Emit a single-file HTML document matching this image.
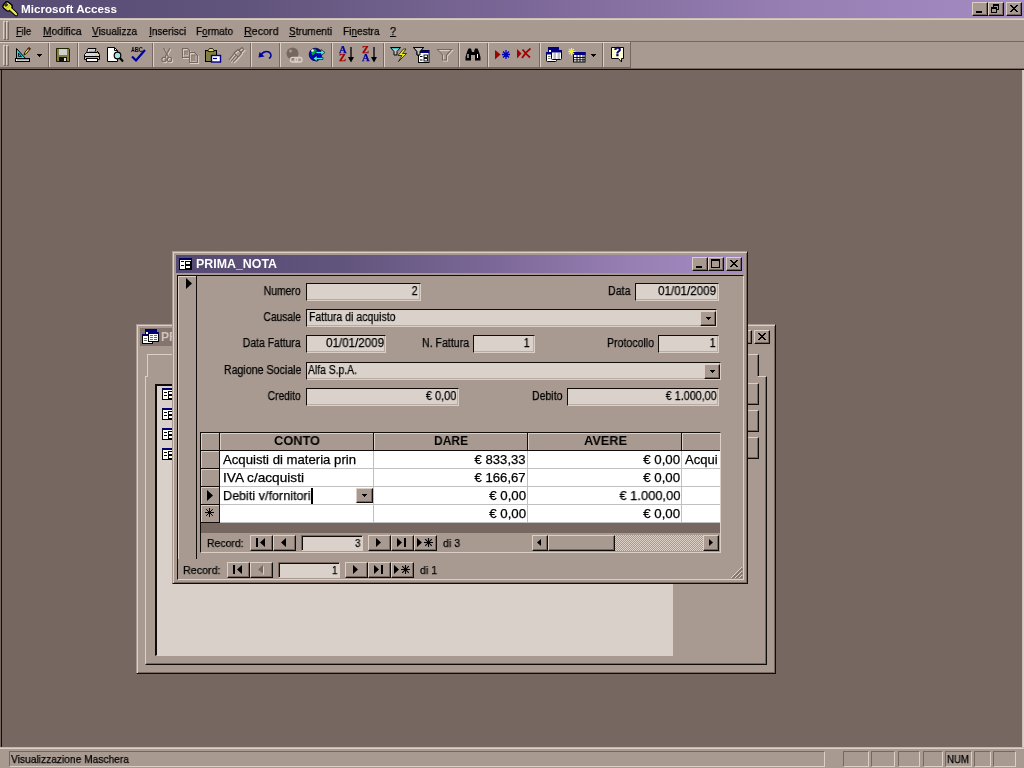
<!DOCTYPE html>
<html><head><meta charset="utf-8"><title>Microsoft Access</title>
<style>
:root{--bg:#766860;--face:#a89a91;--hi:#dcd0c6;--fld:#dad1ca;--dk:#100c0a;--sh:#766860;}
*{box-sizing:border-box;margin:0;padding:0}
html,body{width:1024px;height:768px;overflow:hidden;background:var(--bg);font-family:"Liberation Sans",sans-serif;font-size:11px;color:#000}
.a{position:absolute}
.t{position:absolute;white-space:nowrap;line-height:14px;height:14px;will-change:transform;-webkit-text-stroke:.25px currentColor}
.r{text-align:right}
.btn{position:absolute;background:var(--face);border-top:1px solid var(--hi);border-left:1px solid var(--hi);border-right:1px solid var(--dk);border-bottom:1px solid var(--dk);box-shadow:inset -1px -1px 0 var(--sh)}
.fld{position:absolute;background:var(--fld);border-top:1px solid var(--dk);border-left:1px solid var(--dk);border-right:1px solid var(--hi);border-bottom:1px solid var(--hi);box-shadow:inset -1px -1px 0 #b9aba2;height:18px;line-height:14px;white-space:nowrap;overflow:hidden}
.win{position:absolute;background:var(--face);border-top:1px solid var(--face);border-left:1px solid var(--face);border-right:1px solid var(--dk);border-bottom:1px solid var(--dk);box-shadow:inset 1px 1px 0 var(--hi), inset -1px -1px 0 var(--sh)}
.sep{position:absolute;top:43px;width:2px;height:24px;border-left:1px solid var(--sh);border-right:1px solid var(--hi)}
.grip{position:absolute;width:3px;border-left:1px solid var(--hi);border-top:1px solid var(--hi);border-right:1px solid var(--sh);border-bottom:1px solid var(--sh)}
.sp{position:absolute;top:751px;height:16px;border-top:1px solid var(--sh);border-left:1px solid var(--sh);border-right:1px solid var(--hi);border-bottom:1px solid var(--hi)}
.ic{position:absolute;overflow:visible}
.dt{position:absolute;font-size:13px;line-height:16px;height:16px;white-space:nowrap}
svg{position:absolute;overflow:visible;shape-rendering:crispEdges}
</style></head><body>
<div class="a" style="left:0px;top:0px;width:1024px;height:18px;background:linear-gradient(90deg,#564b73 0%,#62557d 25%,#7b6797 50%,#977fb3 78%,#a48cc4 100%);"></div>
<div class="t" style="font-size:11.5px;line-height:14px;height:14px;font-weight:bold;-webkit-text-stroke:0;color:#fff;left:21px;top:2px;transform-origin:0 0;transform:scaleX(1.0127);">Microsoft Access</div>
<svg style="left:0.800px;top:0.600px;shape-rendering:geometricPrecision" width="18" height="16.200" viewBox="0 0 20 18"><path d="M10.500 9 L16.800 14.800" stroke="#000" stroke-width="4.600" stroke-linecap="round"/><rect x="2.600" y="1.800" width="9.400" height="8.600" rx="3.200" fill="#e8e838" stroke="#000" stroke-width="1.500" transform="rotate(40 7.300 6.100)"/><path d="M10 8.500 L16.800 14.800" stroke="#e8e838" stroke-width="2.400" stroke-linecap="round"/><path d="M11 8.300 L16.500 13.300" stroke="#fffff0" stroke-width=".700"/><path d="M4 4.200 L6.200 2.800 L7.400 4.600 L5.200 6Z" fill="#5a4f78" stroke="#000" stroke-width=".900"/><path d="M6 8.500 L10.500 4.500" stroke="#a8a020" stroke-width=".800"/></svg>
<div class="btn" style="left:972px;top:2px;width:16px;height:14px"></div>
<div class="a" style="left:976px;top:11px;width:6px;height:2px;background:#000;"></div>
<div class="btn" style="left:988px;top:2px;width:16px;height:14px"></div>
<div class="a" style="left:993px;top:4px;width:6px;height:6px;border:1px solid #000;border-top:2px solid #000"></div>
<div class="a" style="left:991px;top:7px;width:6px;height:6px;border:1px solid #000;border-top:2px solid #000;background:var(--face)"></div>
<div class="btn" style="left:1006px;top:2px;width:16px;height:14px"></div>
<svg style="left:1010px;top:5px" width="8" height="7" viewBox="0 0 8 7"><path d="M0 0h2v1h1v1h2v-1h1v-1h2v1h-1v1h-1v1h-1v1h1v1h1v1h1v1h-2v-1h-1v-1h-2v1h-1v1h-2v-1h1v-1h1v-1h1v-1h-1v-1h-1v-1h-1z" fill="#000"/></svg>
<div class="a" style="left:0px;top:18px;width:1024px;height:50px;background:var(--face);"></div>
<div class="a" style="left:0px;top:18px;width:1024px;height:1px;background:#cbbfb5;"></div>
<div class="a" style="left:0px;top:19px;width:1024px;height:1px;background:var(--hi);"></div>
<div class="a" style="left:0px;top:41px;width:1024px;height:1px;background:var(--sh);"></div>
<div class="a" style="left:0px;top:42px;width:631px;height:1px;background:var(--hi);"></div>
<div class="a" style="left:0px;top:67px;width:631px;height:1px;background:var(--sh);"></div>
<div class="a" style="left:0px;top:68px;width:1024px;height:1px;background:var(--sh);"></div>
<div class="a" style="left:0px;top:69px;width:1024px;height:1px;background:var(--dk);"></div>
<div class="grip" style="left:3px;top:21px;height:19px"></div>
<div class="grip" style="left:6px;top:21px;height:19px"></div>
<div class="grip" style="left:3px;top:45px;height:21px"></div>
<div class="grip" style="left:6px;top:45px;height:21px"></div>
<div class="t" style="font-size:11.5px;line-height:14px;height:14px;left:16px;top:24px;transform-origin:0 0;transform:scaleX(0.8095);"><u>F</u>ile</div>
<div class="t" style="font-size:11.5px;line-height:14px;height:14px;left:42.5px;top:24px;transform-origin:0 0;transform:scaleX(0.8991);"><u>M</u>odifica</div>
<div class="t" style="font-size:11.5px;line-height:14px;height:14px;left:92px;top:24px;transform-origin:0 0;transform:scaleX(0.8727);"><u>V</u>isualizza</div>
<div class="t" style="font-size:11.5px;line-height:14px;height:14px;left:148.5px;top:24px;transform-origin:0 0;transform:scaleX(0.8773);"><u>I</u>nserisci</div>
<div class="t" style="font-size:11.5px;line-height:14px;height:14px;left:196px;top:24px;transform-origin:0 0;transform:scaleX(0.8642);">F<u>o</u>rmato</div>
<div class="t" style="font-size:11.5px;line-height:14px;height:14px;left:244px;top:24px;transform-origin:0 0;transform:scaleX(0.9307);"><u>R</u>ecord</div>
<div class="t" style="font-size:11.5px;line-height:14px;height:14px;left:289px;top:24px;transform-origin:0 0;transform:scaleX(0.8738);"><u>S</u>trumenti</div>
<div class="t" style="font-size:11.5px;line-height:14px;height:14px;left:343px;top:24px;transform-origin:0 0;transform:scaleX(0.8787);">Fi<u>n</u>estra</div>
<div class="t" style="font-size:11.5px;line-height:14px;height:14px;left:390px;top:24px;transform-origin:0 0;transform:scaleX(0.9382);"><u>?</u></div>
<div class="sep" style="left:48px"></div>
<div class="sep" style="left:77px"></div>
<div class="sep" style="left:152px"></div>
<div class="sep" style="left:250px"></div>
<div class="sep" style="left:279px"></div>
<div class="sep" style="left:331px"></div>
<div class="sep" style="left:383px"></div>
<div class="sep" style="left:458px"></div>
<div class="sep" style="left:487px"></div>
<div class="sep" style="left:539px"></div>
<div class="sep" style="left:602px"></div>
<div class="a" style="left:630px;top:42px;width:1px;height:26px;background:var(--sh);"></div>
<svg style="left:15px;top:47px;shape-rendering:geometricPrecision" width="16" height="16" viewBox="0 0 16 16"><path d="M1.5 1.5 L1.5 11.5 L10.5 11.5 Z" fill="#20d8e0" stroke="#000" stroke-width="1"/><path d="M3.5 6 L3.5 9.5 L6.5 9.5 Z" fill="#a89a91" stroke="#000" stroke-width=".8"/><rect x="0.5" y="11.5" width="14" height="3" fill="#fff" stroke="#000" stroke-width="1"/><path d="M3 12v1.5M5 12v1.5M7 12v1.5M9 12v1.5M11 12v1.5M13 12v1.5" stroke="#000" stroke-width=".8"/><path d="M9 8 L10 5 L13.5 1 L15 2.2 L11.5 6.5 Z" fill="#e8d040" stroke="#000" stroke-width=".8"/><path d="M12.8 1.6 L14 0.4 L15.6 1.6 L14.6 2.8Z" fill="#803010" stroke="#000" stroke-width=".5"/></svg>
<svg style="left:37px;top:54px" width="5" height="3" viewBox="0 0 5 3"><path d="M0 0h5v1h-1v1h-1v1h-1v-1h-1v-1h-1z" fill="#000"/></svg>
<svg style="left:56px;top:48px;shape-rendering:geometricPrecision" width="14" height="14" viewBox="0 0 14 14"><path d="M0 0H13L14 1V14H0Z" fill="#808040"/><path d="M.5 .5H12.8L13.5 1.2V13.5H.5Z" fill="none" stroke="#202000" stroke-width="1"/><rect x="3" y="1" width="8" height="6" fill="#d0d0d0"/><rect x="3" y="9" width="8" height="5" fill="#101010"/><rect x="8" y="10" width="2" height="3" fill="#e0e0e0"/></svg>
<svg style="left:84px;top:48px;shape-rendering:geometricPrecision" width="16" height="14" viewBox="0 0 16 14"><path d="M4 0.5H12L10.5 5H2.5Z" fill="#fff" stroke="#000" stroke-width="1"/><path d="M5 2H10.5M4.5 3.5H10" stroke="#808080" stroke-width=".8"/><path d="M.5 6.5 L2.5 4.5 H13.5 L15.5 6.5 V11.5 H.5Z" fill="#d8d8d8" stroke="#000" stroke-width="1"/><rect x="1" y="8" width="14" height="1.2" fill="#000"/><rect x="2.5" y="10.5" width="11" height="3" fill="#fff" stroke="#000" stroke-width="1"/><rect x="11" y="6.5" width="2.5" height="1" fill="#e0e000"/><path d="M13 3 L15.5 5.5" stroke="#000" stroke-width="1"/></svg>
<svg style="left:107px;top:47px;shape-rendering:geometricPrecision" width="17" height="16" viewBox="0 0 17 16"><path d="M.5 .5H7.5L10.5 3.5V14.5H.5Z" fill="#fff" stroke="#000" stroke-width="1"/><path d="M7.5 .5V3.5H10.5" fill="none" stroke="#000" stroke-width="1"/><circle cx="10.5" cy="8.5" r="3.3" fill="#a0e8e8" stroke="#000" stroke-width="1.2"/><path d="M13 11 L16 14.5" stroke="#000" stroke-width="2"/></svg>
<div class="t" style="font-size:6.5px;line-height:10px;height:10px;font-weight:bold;-webkit-text-stroke:0;left:131px;top:45px;transform-origin:0 0;transform:scaleX(0.8167);">ABC</div>
<svg style="left:130px;top:49px;shape-rendering:geometricPrecision" width="17" height="14" viewBox="0 0 17 14"><path d="M2 7.5 L6 11.5 L15 1" fill="none" stroke="#0000a0" stroke-width="2.2"/></svg>
<svg style="left:162px;top:49px;shape-rendering:geometricPrecision" width="12" height="15" viewBox="0 0 12 15"><g stroke="#dcd0c6" fill="none" stroke-width="1.1"><path d="M2.5 0 L7.5 9 M9 0 L4 9"/><circle cx="3" cy="11.5" r="2.2"/><circle cx="8.5" cy="11.5" r="2.2"/></g></svg>
<svg style="left:161px;top:48px;shape-rendering:geometricPrecision" width="12" height="15" viewBox="0 0 12 15"><g stroke="#766860" fill="none" stroke-width="1.1"><path d="M2.5 0 L7.5 9 M9 0 L4 9"/><circle cx="3" cy="11.5" r="2.2"/><circle cx="8.5" cy="11.5" r="2.2"/></g></svg>
<svg style="left:183px;top:49px;shape-rendering:geometricPrecision" width="17" height="15" viewBox="0 0 17 15"><g stroke="#dcd0c6" fill="none" stroke-width="1.1"><path d="M.5 .5H5.5L7.5 2.5V9.5H.5Z"/><path d="M2 4H6M2 6H6"/><path d="M7.5 4.5H12.5L15.5 7.5V14.5H7.5Z" /><path d="M9 8H13.5M9 10H13.5M9 12H13.5"/></g></svg>
<svg style="left:182px;top:48px;shape-rendering:geometricPrecision" width="17" height="15" viewBox="0 0 17 15"><g stroke="#766860" fill="none" stroke-width="1.1"><path d="M.5 .5H5.5L7.5 2.5V9.5H.5Z"/><path d="M2 4H6M2 6H6"/><path d="M7.5 4.5H12.5L15.5 7.5V14.5H7.5Z" /><path d="M9 8H13.5M9 10H13.5M9 12H13.5"/></g></svg>
<svg style="left:205px;top:48px;shape-rendering:geometricPrecision" width="17" height="15" viewBox="0 0 17 15"><rect x=".5" y="2.5" width="11" height="11" fill="#808040" stroke="#000" stroke-width="1"/><path d="M3 2.5 L4.5 .5 H7.5 L9 2.5 V3.5 H3Z" fill="#e0d860" stroke="#000" stroke-width=".8"/><rect x="6.500" y="7.500" width="9" height="6.500" fill="#fff" stroke="#000090" stroke-width="1.400"/><path d="M8 10.500H12" stroke="#000090" stroke-width="1.200"/></svg>
<svg style="left:229px;top:48px;shape-rendering:geometricPrecision" width="17" height="16" viewBox="0 0 17 16"><g stroke="#dcd0c6" fill="none" stroke-width="1.1"><path d="M11 3 L14 0.500 L16 2.500 L13 5.500Z"/><path d="M6 6 L10 2.500 L13.500 6 L10 10Z"/><path d="M1 13 L6 6.500 M2.500 14.500 L8 8.500 M5 15 L10 10"/></g></svg>
<svg style="left:228px;top:47px;shape-rendering:geometricPrecision" width="17" height="16" viewBox="0 0 17 16"><g stroke="#766860" fill="none" stroke-width="1.1"><path d="M11 3 L14 0.500 L16 2.500 L13 5.500Z"/><path d="M6 6 L10 2.500 L13.500 6 L10 10Z"/><path d="M1 13 L6 6.500 M2.500 14.500 L8 8.500 M5 15 L10 10"/></g></svg>
<svg style="left:258px;top:50px;shape-rendering:geometricPrecision" width="15" height="9" viewBox="0 0 15 9"><path d="M3 5.500 C4 1.500,10 0,12.500 3.500 C13.500 5.500,12.500 7.500,11 8.500" fill="none" stroke="#0000a0" stroke-width="1.500"/><path d="M.500 7.500 L1.500 2 L6.500 6.500Z" fill="#0000a0"/></svg>
<svg style="left:286px;top:47px;shape-rendering:geometricPrecision" width="17" height="16" viewBox="0 0 17 16"><circle cx="6.500" cy="6.500" r="6" fill="#766860"/><circle cx="4.500" cy="4" r="1.500" fill="#a89a91"/><rect x="4.500" y="10.500" width="7" height="4.500" rx="2" fill="none" stroke="#dcd0c6" stroke-width="1.300"/><rect x="9" y="10.500" width="7" height="4.500" rx="2" fill="none" stroke="#dcd0c6" stroke-width="1.300"/></svg>
<svg style="left:309px;top:47px;shape-rendering:geometricPrecision" width="17" height="16" viewBox="0 0 17 16"><circle cx="6.500" cy="7.500" r="6.300" fill="#0000c0" stroke="#000040" stroke-width=".800"/><path d="M2 4 C4 1,7 2,8 4 C6 6,5 9,3 8Z" fill="#00a040"/><path d="M5 11 C7 10,9 12,7 13.500Z" fill="#00a040"/><circle cx="3.500" cy="3.500" r="1.200" fill="#fff"/><path d="M7 4.500 H12 V2.500 L16 5.500 L12 8.500 V6.500 H7Z" fill="#40e8f0" stroke="#000" stroke-width=".600"/><path d="M14 10.500 H8 V8.500 L4 11.500 L8 14.500 V12.500 H14Z" fill="#40e8f0" stroke="#000" stroke-width=".600"/></svg>
<div class="t" style="left:339px;top:44px;font-size:10.500px;font-weight:bold;line-height:11px;color:#0000a0;font-family:'Liberation Serif',serif">A</div>
<div class="t" style="left:339px;top:52px;font-size:10.500px;font-weight:bold;line-height:11px;color:#a00000;font-family:'Liberation Serif',serif">Z</div>
<svg style="left:348px;top:47px;shape-rendering:geometricPrecision" width="6" height="16" viewBox="0 0 6 16"><path d="M3 0V12" stroke="#000" stroke-width="1.300"/><path d="M0 10H6L3 15.500Z" fill="#000"/></svg>
<div class="t" style="left:362px;top:44px;font-size:10.500px;font-weight:bold;line-height:11px;color:#a00000;font-family:'Liberation Serif',serif">Z</div>
<div class="t" style="left:362px;top:52px;font-size:10.500px;font-weight:bold;line-height:11px;color:#0000a0;font-family:'Liberation Serif',serif">A</div>
<svg style="left:371px;top:47px;shape-rendering:geometricPrecision" width="6" height="16" viewBox="0 0 6 16"><path d="M3 0V12" stroke="#000" stroke-width="1.300"/><path d="M0 10H6L3 15.500Z" fill="#000"/></svg>
<svg style="left:390px;top:47px;shape-rendering:geometricPrecision" width="17" height="16" viewBox="0 0 17 16"><path d="M.500 .500H10.500L7 4.500V8H4V4.500Z" fill="#c0c0c0" stroke="#000" stroke-width="1"/><path d="M2 1.500H9" stroke="#40c0c0" stroke-width="1"/><path d="M13.500 2 L8 8.500 H12 L8.500 14.500 L16.500 6.500 H12.500 L16 2Z" fill="#f0f020" stroke="#000" stroke-width=".700"/></svg>
<svg style="left:413px;top:47px;shape-rendering:geometricPrecision" width="17" height="16" viewBox="0 0 17 16"><path d="M.500 .500H10.500L7 4.500V8H4V4.500Z" fill="#c0c0c0" stroke="#000" stroke-width="1"/><path d="M2 1.500H9" stroke="#40c0c0" stroke-width="1"/><rect x="5.500" y="3.500" width="10.500" height="12" fill="#fff" stroke="#000" stroke-width="1"/><rect x="5.500" y="3.500" width="10.500" height="2.500" fill="#000080"/><rect x="11" y="8" width="3.500" height="2.500" fill="none" stroke="#000" stroke-width=".900"/><rect x="11" y="11.500" width="3.500" height="2.500" fill="none" stroke="#000" stroke-width=".900"/><path d="M7 9.500H9.500M7 13H9.500" stroke="#000" stroke-width="1"/><path d="M.500 .500H10.500L7 4.500V8H4V4.500Z" fill="#c0c0c0" stroke="#000" stroke-width="1"/></svg>
<svg style="left:438px;top:50px;shape-rendering:geometricPrecision" width="15" height="12" viewBox="0 0 15 12"><g stroke="#dcd0c6" fill="none" stroke-width="1.1"><path d="M.500 .500H14.500L9.500 6V11H5.500V6Z"/></g></svg>
<svg style="left:437px;top:49px;shape-rendering:geometricPrecision" width="15" height="12" viewBox="0 0 15 12"><g stroke="#766860" fill="none" stroke-width="1.1"><path d="M.500 .500H14.500L9.500 6V11H5.500V6Z"/></g></svg>
<svg style="left:465px;top:48px;shape-rendering:geometricPrecision" width="16" height="13" viewBox="0 0 16 13"><path d="M2 4 L3.500 .500 H6 L7 4 H9 L10 .500 H12.500 L14 4 L15.500 9 V12.500 H10 V7 H6 V12.500 H.500 V9Z" fill="#000"/><path d="M3 6V10M12.500 6V10" stroke="#fff" stroke-width="1"/></svg>
<svg style="left:495px;top:50px;shape-rendering:geometricPrecision" width="6" height="10" viewBox="0 0 6 10"><path d="M0 0L5.500 4.500L0 9.500Z" fill="#a00000"/></svg>
<svg style="left:502px;top:50px;shape-rendering:geometricPrecision" width="8" height="9" viewBox="0 0 8 9"><path d="M4 0V9M0 4.500H8M1 1.500L7 7.500M7 1.500L1 7.500" stroke="#0000c0" stroke-width="1.300" fill="none"/></svg>
<svg style="left:517px;top:49px;shape-rendering:geometricPrecision" width="5" height="10" viewBox="0 0 5 10"><path d="M0 0L4.500 4.500L0 9.500Z" fill="#a00000"/></svg>
<svg style="left:521px;top:48px;shape-rendering:geometricPrecision" width="10" height="11" viewBox="0 0 10 11"><path d="M1 10 C3 7,6 3,9.500 .500 M1.500 1.500 C3.500 4,6 7,9 9.500" stroke="#a00000" stroke-width="1.700" fill="none"/></svg>
<svg style="left:546px;top:47px;shape-rendering:geometricPrecision" width="17" height="15" viewBox="0 0 17 15"><rect x="2.500" y=".500" width="10" height="9" fill="#fff" stroke="#000070" stroke-width="1"/><rect x="2" y="0" width="11" height="3" fill="#000080"/><rect x=".500" y="5.500" width="10" height="9" rx="1" fill="#fff" stroke="#000" stroke-width="1"/><rect x="0" y="5" width="11" height="2.500" fill="#000080"/><rect x="5.500" y="3.500" width="10" height="9" rx="1" fill="#fff" stroke="#000" stroke-width="1"/><rect x="5" y="3" width="11" height="2.500" fill="#000080"/><path d="M7.500 7H10M11.500 7H14M7.500 9H10M11.500 9H14M7.500 11H10M11.500 11H14M2 9.500H4.500M2 11.500H4.500" stroke="#808080" stroke-width="1"/></svg>
<svg style="left:568px;top:48px;shape-rendering:geometricPrecision" width="18" height="15" viewBox="0 0 18 15"><rect x="5.500" y="4.500" width="11.500" height="9.500" fill="#fff" stroke="#000" stroke-width="1"/><rect x="5" y="4" width="12.500" height="3" fill="#000080"/><path d="M6 9.500H17M6 11.800H17M9 7V14M12 7V14M15 7V14" stroke="#000" stroke-width=".900"/><path d="M3.500 0V7.500M0 3.500H7.500M1 1L6 6M6 1L1 6" stroke="#f0f040" stroke-width="1.100"/></svg>
<svg style="left:591px;top:54px" width="5" height="3" viewBox="0 0 5 3"><path d="M0 0h5v1h-1v1h-1v1h-1v-1h-1v-1h-1z" fill="#000"/></svg>
<svg style="left:611px;top:47px;shape-rendering:geometricPrecision" width="14" height="16" viewBox="0 0 14 16"><path d="M.500 .500H12.500V11.500H10.500V15L7.500 11.500H.500Z" fill="#ffffd0" stroke="#000" stroke-width="1"/></svg>
<div class="t" style="left:614px;top:46px;font-size:12px;font-weight:bold;line-height:13px;color:#000070;-webkit-text-stroke:.4px #000070">?</div>
<div class="a" style="left:0px;top:70px;width:1024px;height:677px;background:var(--bg);"></div>
<div class="a" style="left:0px;top:70px;width:1px;height:677px;background:var(--sh);"></div>
<div class="a" style="left:1px;top:70px;width:1px;height:677px;background:var(--dk);"></div>
<div class="a" style="left:1022px;top:70px;width:1px;height:677px;background:#cfc3ba;"></div>
<div class="a" style="left:1023px;top:70px;width:1px;height:677px;background:var(--hi);"></div>
<div class="a" style="left:0px;top:747px;width:1024px;height:21px;background:var(--face);"></div>
<div class="a" style="left:0px;top:747px;width:1024px;height:1px;background:#c4b8ae;"></div>
<div class="a" style="left:0px;top:748px;width:1024px;height:1px;background:var(--hi);"></div>
<div class="sp" style="left:9px;width:816px"></div>
<div class="sp" style="left:843px;width:26px"></div>
<div class="sp" style="left:871px;width:24px"></div>
<div class="sp" style="left:898px;width:22px"></div>
<div class="sp" style="left:923px;width:20px"></div>
<div class="sp" style="left:945px;width:27px"></div>
<div class="sp" style="left:974px;width:17px"></div>
<div class="sp" style="left:993px;width:23px"></div>
<div class="t" style="font-size:11.5px;line-height:14px;height:14px;left:11px;top:752px;transform-origin:0 0;transform:scaleX(0.8890);">Visualizzazione Maschera</div>
<div class="t" style="font-size:11.5px;line-height:14px;height:14px;left:947px;top:752px;transform-origin:0 0;transform:scaleX(0.8400);">NUM</div>
<div class="win" style="left:136px;top:324px;width:640px;height:350px"></div>
<div class="a" style="left:140px;top:328px;width:632px;height:18px;background:linear-gradient(90deg,#84746d 0%,#8a7a73 30%,#9a8b83 65%,#a6988f 100%);"></div>
<svg style="left:142px;top:329px" width="17" height="15" viewBox="0 0 17 15"><rect x="3" y="0" width="11" height="9" fill="#fff" stroke="#000060" stroke-width="1" transform="translate(.5,.5)"/><rect x="3" y="0" width="12" height="3" fill="#000070"/><rect x="0" y="5" width="10" height="9" fill="#fff" stroke="#000" stroke-width="1" transform="translate(.5,.5)"/><rect x="0" y="5" width="11" height="2" fill="#000070"/><rect x="6" y="3" width="10" height="9" fill="#fff" stroke="#000" stroke-width="1" transform="translate(.5,.5)"/><rect x="6" y="3" width="11" height="2" fill="#000070"/><g fill="#707070"><rect x="8" y="6" width="3" height="1"/><rect x="12" y="6" width="3" height="1"/><rect x="8" y="8" width="3" height="1"/><rect x="12" y="8" width="3" height="1"/><rect x="8" y="10" width="3" height="1"/><rect x="12" y="10" width="3" height="1"/><rect x="2" y="9" width="3" height="1"/><rect x="2" y="11" width="3" height="1"/></g></svg>
<div class="t" style="font-size:12px;line-height:14px;height:14px;font-weight:bold;-webkit-text-stroke:0;color:#cfc4bc;left:161px;top:330px;transform-origin:0 0;transform:scaleX(1.0086);">PRIMA</div>
<div class="btn" style="left:736px;top:330px;width:16px;height:14px"></div>
<div class="a" style="left:739px;top:332px;width:9px;height:9px;border:1px solid #000;border-top:2px solid #000"></div>
<div class="btn" style="left:754px;top:330px;width:16px;height:14px"></div>
<svg style="left:758px;top:333px" width="8" height="7" viewBox="0 0 8 7"><path d="M0 0h2v1h1v1h2v-1h1v-1h2v1h-1v1h-1v1h-1v1h1v1h1v1h1v1h-2v-1h-1v-1h-2v1h-1v1h-2v-1h1v-1h1v-1h1v-1h-1v-1h-1v-1h-1z" fill="#000"/></svg>
<div class="a" style="left:147px;top:354px;width:612px;height:23px;border-top:1px solid var(--hi);border-left:1px solid var(--hi);border-right:1px solid var(--dk);box-shadow:inset -1px 0 0 var(--sh)"></div>
<div class="a" style="left:145px;top:376px;width:622px;height:289px;background:var(--face);border-top:1px solid var(--hi);border-left:1px solid var(--hi);border-right:1px solid var(--dk);border-bottom:1px solid var(--dk);box-shadow:inset -1px -1px 0 var(--sh)"></div>
<div class="a" style="left:148px;top:376px;width:610px;height:1px;background:var(--face);"></div>
<div class="a" style="left:155px;top:384px;width:518px;height:272px;background:#d9d0c9;border-top:2px solid var(--dk);border-left:2px solid var(--dk);border-right:1px solid var(--hi);border-bottom:1px solid var(--hi)"></div>
<svg style="left:162px;top:388px" width="13" height="12" viewBox="0 0 13 12"><rect x="0" y="0" width="13" height="12" fill="#000070"/><rect x="1" y="2" width="11" height="9" fill="#fff"/><rect x="0" y="2" width="1" height="10" fill="#000"/><rect x="12" y="2" width="1" height="10" fill="#000"/><rect x="0" y="11" width="13" height="1" fill="#000"/><rect x="2" y="4" width="3" height="1" fill="#000"/><rect x="2" y="7" width="3" height="1" fill="#000"/><rect x="6" y="3" width="5" height="3" fill="none" stroke="#000" stroke-width="1" transform="translate(.5,.5)"/><rect x="6" y="7" width="5" height="3" fill="none" stroke="#000" stroke-width="1" transform="translate(.5,.5)"/></svg>
<svg style="left:162px;top:408px" width="13" height="12" viewBox="0 0 13 12"><rect x="0" y="0" width="13" height="12" fill="#000070"/><rect x="1" y="2" width="11" height="9" fill="#fff"/><rect x="0" y="2" width="1" height="10" fill="#000"/><rect x="12" y="2" width="1" height="10" fill="#000"/><rect x="0" y="11" width="13" height="1" fill="#000"/><rect x="2" y="4" width="3" height="1" fill="#000"/><rect x="2" y="7" width="3" height="1" fill="#000"/><rect x="6" y="3" width="5" height="3" fill="none" stroke="#000" stroke-width="1" transform="translate(.5,.5)"/><rect x="6" y="7" width="5" height="3" fill="none" stroke="#000" stroke-width="1" transform="translate(.5,.5)"/></svg>
<svg style="left:162px;top:428px" width="13" height="12" viewBox="0 0 13 12"><rect x="0" y="0" width="13" height="12" fill="#000070"/><rect x="1" y="2" width="11" height="9" fill="#fff"/><rect x="0" y="2" width="1" height="10" fill="#000"/><rect x="12" y="2" width="1" height="10" fill="#000"/><rect x="0" y="11" width="13" height="1" fill="#000"/><rect x="2" y="4" width="3" height="1" fill="#000"/><rect x="2" y="7" width="3" height="1" fill="#000"/><rect x="6" y="3" width="5" height="3" fill="none" stroke="#000" stroke-width="1" transform="translate(.5,.5)"/><rect x="6" y="7" width="5" height="3" fill="none" stroke="#000" stroke-width="1" transform="translate(.5,.5)"/></svg>
<svg style="left:162px;top:448px" width="13" height="12" viewBox="0 0 13 12"><rect x="0" y="0" width="13" height="12" fill="#000070"/><rect x="1" y="2" width="11" height="9" fill="#fff"/><rect x="0" y="2" width="1" height="10" fill="#000"/><rect x="12" y="2" width="1" height="10" fill="#000"/><rect x="0" y="11" width="13" height="1" fill="#000"/><rect x="2" y="4" width="3" height="1" fill="#000"/><rect x="2" y="7" width="3" height="1" fill="#000"/><rect x="6" y="3" width="5" height="3" fill="none" stroke="#000" stroke-width="1" transform="translate(.5,.5)"/><rect x="6" y="7" width="5" height="3" fill="none" stroke="#000" stroke-width="1" transform="translate(.5,.5)"/></svg>
<div class="btn" style="left:683px;top:383px;width:76px;height:22px"></div>
<div class="btn" style="left:683px;top:410px;width:76px;height:22px"></div>
<div class="btn" style="left:683px;top:437px;width:76px;height:22px"></div>
<div class="win" style="left:172px;top:251px;width:576px;height:333px"></div>
<div class="a" style="left:176px;top:255px;width:568px;height:18px;background:linear-gradient(90deg,#554a72 0%,#62557d 30%,#7b6797 55%,#977fb3 80%,#a48cc4 100%);"></div>
<svg style="left:179px;top:258px" width="13" height="12" viewBox="0 0 13 12"><rect x="0" y="0" width="13" height="12" fill="#000060"/><rect x="1" y="2" width="11" height="9" fill="#fff"/><rect x="0" y="2" width="1" height="10" fill="#000"/><rect x="12" y="2" width="1" height="10" fill="#000"/><rect x="0" y="11" width="13" height="1" fill="#000"/><rect x="2" y="3" width="3" height="1" fill="#000"/><rect x="2" y="7" width="3" height="1" fill="#000"/><rect x="6" y="3" width="5" height="3" fill="none" stroke="#000" stroke-width="1" transform="translate(.5,.5)"/><rect x="6" y="7" width="5" height="3" fill="none" stroke="#000" stroke-width="1" transform="translate(.5,.5)"/></svg>
<div class="t" style="font-size:12px;line-height:14px;height:14px;font-weight:bold;-webkit-text-stroke:0;color:#fff;left:196px;top:257px;transform-origin:0 0;transform:scaleX(1.0326);">PRIMA_NOTA</div>
<div class="btn" style="left:692px;top:257px;width:16px;height:14px"></div>
<div class="a" style="left:696px;top:266px;width:6px;height:2px;background:#000;"></div>
<div class="btn" style="left:708px;top:257px;width:16px;height:14px"></div>
<div class="a" style="left:711px;top:259px;width:9px;height:9px;border:1px solid #000;border-top:2px solid #000"></div>
<div class="btn" style="left:726px;top:257px;width:16px;height:14px"></div>
<svg style="left:730px;top:260px" width="8" height="7" viewBox="0 0 8 7"><path d="M0 0h2v1h1v1h2v-1h1v-1h2v1h-1v1h-1v1h-1v1h1v1h1v1h1v1h-2v-1h-1v-1h-2v1h-1v1h-2v-1h1v-1h1v-1h1v-1h-1v-1h-1v-1h-1z" fill="#000"/></svg>
<div class="a" style="left:177px;top:275px;width:567px;height:305px;border-top:1px solid var(--dk);border-left:1px solid var(--dk);border-right:1px solid var(--hi);border-bottom:1px solid var(--hi)"></div>
<div class="a" style="left:178px;top:276px;width:18px;height:283px;background:var(--face);border-left:1px solid var(--hi);border-top:1px solid var(--hi)"></div>
<div class="a" style="left:196px;top:276px;width:1px;height:283px;background:var(--dk);"></div>
<svg style="left:186px;top:278px" width="6" height="11" viewBox="0 0 6 11"><path d="M0 0 L6 5.5 L0 11Z" fill="#000" shape-rendering="auto"/></svg>
<div class="t" style="font-size:12px;line-height:14px;height:14px;right:723px;top:284px;transform-origin:100% 0;transform:scaleX(0.8669);">Numero</div>
<div class="t" style="font-size:12px;line-height:14px;height:14px;right:723px;top:310px;transform-origin:100% 0;transform:scaleX(0.8518);">Causale</div>
<div class="t" style="font-size:12px;line-height:14px;height:14px;right:723px;top:336px;transform-origin:100% 0;transform:scaleX(0.8696);">Data Fattura</div>
<div class="t" style="font-size:12px;line-height:14px;height:14px;right:723px;top:363px;transform-origin:100% 0;transform:scaleX(0.8868);">Ragione Sociale</div>
<div class="t" style="font-size:12px;line-height:14px;height:14px;right:723px;top:389px;transform-origin:100% 0;transform:scaleX(0.8531);">Credito</div>
<div class="t" style="font-size:12px;line-height:14px;height:14px;left:607.5px;top:284px;transform-origin:0 0;transform:scaleX(0.8877);">Data</div>
<div class="t" style="font-size:12px;line-height:14px;height:14px;left:421.5px;top:336px;transform-origin:0 0;transform:scaleX(0.8810);">N. Fattura</div>
<div class="t" style="font-size:12px;line-height:14px;height:14px;left:606.5px;top:336px;transform-origin:0 0;transform:scaleX(0.8808);">Protocollo</div>
<div class="t" style="font-size:12px;line-height:14px;height:14px;left:531.5px;top:389px;transform-origin:0 0;transform:scaleX(0.8793);">Debito</div>
<div class="fld" style="left:306px;top:283px;width:115px"></div>
<div class="t" style="font-size:12px;line-height:14px;height:14px;right:606px;top:284px;transform-origin:100% 0;transform:scaleX(0.8991);">2</div>
<div class="fld" style="left:635px;top:283px;width:84px"></div>
<div class="t" style="font-size:12px;line-height:14px;height:14px;right:308px;top:284px;transform-origin:100% 0;transform:scaleX(0.9658);">01/01/2009</div>
<div class="fld" style="left:306px;top:309px;width:411px"></div>
<div class="t" style="font-size:12px;line-height:14px;height:14px;left:309px;top:310px;transform-origin:0 0;transform:scaleX(0.8762);">Fattura di acquisto</div>
<div class="fld" style="left:306px;top:335px;width:80px"></div>
<div class="t" style="font-size:12px;line-height:14px;height:14px;right:640px;top:336px;transform-origin:100% 0;transform:scaleX(0.9658);">01/01/2009</div>
<div class="fld" style="left:473px;top:335px;width:62px"></div>
<div class="t" style="font-size:12px;line-height:14px;height:14px;right:494px;top:336px;transform-origin:100% 0;transform:scaleX(0.8991);">1</div>
<div class="fld" style="left:658px;top:335px;width:61px"></div>
<div class="t" style="font-size:12px;line-height:14px;height:14px;right:308px;top:336px;transform-origin:100% 0;transform:scaleX(0.8991);">1</div>
<div class="fld" style="left:306px;top:362px;width:415px"></div>
<div class="t" style="font-size:12px;line-height:14px;height:14px;left:308px;top:363px;transform-origin:0 0;transform:scaleX(0.8642);">Alfa S.p.A.</div>
<div class="fld" style="left:306px;top:388px;width:153px"></div>
<div class="t" style="font-size:12px;line-height:14px;height:14px;right:567.5px;top:389px;transform-origin:100% 0;transform:scaleX(0.9142);">&euro; 0,00</div>
<div class="fld" style="left:567px;top:388px;width:152px"></div>
<div class="t" style="font-size:12px;line-height:14px;height:14px;right:307px;top:389px;transform-origin:100% 0;transform:scaleX(0.8992);">&euro; 1.000,00</div>
<div class="btn" style="left:700px;top:311px;width:16px;height:15px"></div>
<svg style="left:706px;top:317px" width="5" height="3" viewBox="0 0 5 3"><path d="M0 0h5v1h-1v1h-1v1h-1v-1h-1v-1h-1z" fill="#000"/></svg>
<div class="btn" style="left:704px;top:364px;width:16px;height:15px"></div>
<svg style="left:710px;top:370px" width="5" height="3" viewBox="0 0 5 3"><path d="M0 0h5v1h-1v1h-1v1h-1v-1h-1v-1h-1z" fill="#000"/></svg>
<div class="a" style="left:200px;top:432px;width:521px;height:121px;background:var(--face);"></div>
<div class="a" style="left:200px;top:432px;width:521px;height:121px;border-top:1px solid var(--dk);border-left:1px solid var(--dk);border-bottom:1px solid var(--hi);border-right:1px solid var(--hi)"></div>
<div class="a" style="left:201px;top:451px;width:519px;height:72px;background:#fff;"></div>
<div class="a" style="left:201px;top:433px;width:519px;height:17px;background:var(--face);"></div>
<div class="a" style="left:201px;top:433px;width:519px;height:1px;background:var(--hi);"></div>
<div class="a" style="left:201px;top:450px;width:519px;height:1px;background:var(--dk);"></div>
<div class="a" style="left:201px;top:433px;width:1px;height:17px;background:var(--hi);"></div>
<div class="a" style="left:220px;top:433px;width:1px;height:17px;background:var(--hi);"></div>
<div class="a" style="left:374px;top:433px;width:1px;height:17px;background:var(--hi);"></div>
<div class="a" style="left:528px;top:433px;width:1px;height:17px;background:var(--hi);"></div>
<div class="a" style="left:682px;top:433px;width:1px;height:17px;background:var(--hi);"></div>
<div class="a" style="left:219px;top:433px;width:1px;height:90px;background:var(--dk);"></div>
<div class="a" style="left:373px;top:433px;width:1px;height:90px;background:var(--dk);"></div>
<div class="a" style="left:527px;top:433px;width:1px;height:90px;background:var(--dk);"></div>
<div class="a" style="left:681px;top:433px;width:1px;height:90px;background:var(--dk);"></div>
<div class="a" style="left:373px;top:451px;width:1px;height:72px;background:#c0c0c0;"></div>
<div class="a" style="left:527px;top:451px;width:1px;height:72px;background:#c0c0c0;"></div>
<div class="a" style="left:681px;top:451px;width:1px;height:72px;background:#c0c0c0;"></div>
<div class="a" style="left:220px;top:468px;width:500px;height:1px;background:#c0c0c0;"></div>
<div class="a" style="left:220px;top:486px;width:500px;height:1px;background:#c0c0c0;"></div>
<div class="a" style="left:220px;top:504px;width:500px;height:1px;background:#c0c0c0;"></div>
<div class="a" style="left:220px;top:522px;width:500px;height:1px;background:#c0c0c0;"></div>
<div class="a" style="left:201px;top:451px;width:18px;height:17px;background:var(--face);border-left:1px solid var(--hi);border-top:1px solid var(--hi)"></div>
<div class="a" style="left:201px;top:468px;width:19px;height:1px;background:var(--dk);"></div>
<div class="a" style="left:201px;top:469px;width:18px;height:17px;background:var(--face);border-left:1px solid var(--hi);border-top:1px solid var(--hi)"></div>
<div class="a" style="left:201px;top:486px;width:19px;height:1px;background:var(--dk);"></div>
<div class="a" style="left:201px;top:487px;width:18px;height:17px;background:var(--face);border-left:1px solid var(--hi);border-top:1px solid var(--hi)"></div>
<div class="a" style="left:201px;top:504px;width:19px;height:1px;background:var(--dk);"></div>
<div class="a" style="left:201px;top:505px;width:18px;height:17px;background:var(--face);border-left:1px solid var(--hi);border-top:1px solid var(--hi)"></div>
<div class="a" style="left:201px;top:522px;width:19px;height:1px;background:var(--dk);"></div>
<div class="a" style="left:219px;top:433px;width:1px;height:90px;background:var(--dk);"></div>
<div class="t" style="font-size:13px;line-height:16px;height:16px;font-weight:bold;-webkit-text-stroke:0;left:274px;top:433px;transform-origin:0 0;transform:scaleX(0.9849);">CONTO</div>
<div class="t" style="font-size:13px;line-height:16px;height:16px;font-weight:bold;-webkit-text-stroke:0;left:434px;top:433px;transform-origin:0 0;transform:scaleX(0.9231);">DARE</div>
<div class="t" style="font-size:13px;line-height:16px;height:16px;font-weight:bold;-webkit-text-stroke:0;left:584px;top:433px;transform-origin:0 0;transform:scaleX(0.9812);">AVERE</div>
<div class="t" style="font-size:13px;line-height:16px;height:16px;left:223px;top:452px;transform-origin:0 0;transform:scaleX(1.0114);">Acquisti di materia prin</div>
<div class="t" style="font-size:13px;line-height:16px;height:16px;left:223px;top:470px;transform-origin:0 0;transform:scaleX(1.0509);">IVA c/acquisti</div>
<div class="t" style="font-size:13px;line-height:16px;height:16px;left:223px;top:488px;transform-origin:0 0;transform:scaleX(0.9689);">Debiti v/fornitori</div>
<div class="a" style="left:311px;top:488px;width:2px;height:16px;background:#000;"></div>
<div class="t" style="font-size:13px;line-height:16px;height:16px;right:498px;top:452px;transform-origin:100% 0;transform:scaleX(1.0078);">&euro; 833,33</div>
<div class="t" style="font-size:13px;line-height:16px;height:16px;right:498px;top:470px;transform-origin:100% 0;transform:scaleX(1.0078);">&euro; 166,67</div>
<div class="t" style="font-size:13px;line-height:16px;height:16px;right:498px;top:488px;transform-origin:100% 0;transform:scaleX(1.0237);">&euro; 0,00</div>
<div class="t" style="font-size:13px;line-height:16px;height:16px;right:498px;top:506px;transform-origin:100% 0;transform:scaleX(1.0237);">&euro; 0,00</div>
<div class="t" style="font-size:13px;line-height:16px;height:16px;right:344px;top:452px;transform-origin:100% 0;transform:scaleX(1.0237);">&euro; 0,00</div>
<div class="t" style="font-size:13px;line-height:16px;height:16px;right:344px;top:470px;transform-origin:100% 0;transform:scaleX(1.0237);">&euro; 0,00</div>
<div class="t" style="font-size:13px;line-height:16px;height:16px;right:344px;top:488px;transform-origin:100% 0;transform:scaleX(0.9928);">&euro; 1.000,00</div>
<div class="t" style="font-size:13px;line-height:16px;height:16px;right:344px;top:506px;transform-origin:100% 0;transform:scaleX(1.0237);">&euro; 0,00</div>
<div class="t" style="font-size:13px;line-height:16px;height:16px;left:685px;top:452px;transform-origin:0 0;transform:scaleX(0.9995);">Acqui</div>
<svg style="left:207px;top:490px" width="6" height="11" viewBox="0 0 6 11"><path d="M0 0 L6 5.5 L0 11Z" fill="#000" shape-rendering="auto"/></svg>
<svg style="left:205px;top:508px" width="9" height="9" viewBox="0 0 9 9"><path d="M4.5 0V9M0 4.5H9M1.2 1.2L7.8 7.8M7.8 1.2L1.2 7.8" stroke="#000" stroke-width="1" fill="none" shape-rendering="auto"/></svg>
<div class="btn" style="left:356px;top:488px;width:17px;height:15px"></div>
<svg style="left:362px;top:494px" width="5" height="3" viewBox="0 0 5 3"><path d="M0 0h5v1h-1v1h-1v1h-1v-1h-1v-1h-1z" fill="#000"/></svg>
<div class="a" style="left:201px;top:523px;width:519px;height:10px;background:var(--sh);"></div>
<div class="a" style="left:201px;top:533px;width:519px;height:19px;background:var(--face);"></div>
<div class="t" style="font-size:11.5px;line-height:14px;height:14px;left:207px;top:536px;transform-origin:0 0;transform:scaleX(0.9065);">Record:</div>
<div class="btn" style="left:250px;top:535px;width:23px;height:16px"></div>
<div class="a" style="left:256px;top:538px;width:2px;height:9px;background:#000;"></div>
<svg style="left:260px;top:538px" width="5" height="9" viewBox="0 0 5 9"><path d="M5 0L0 4.5L5 9Z" fill="#000" shape-rendering="auto"/></svg>
<div class="btn" style="left:273px;top:535px;width:23px;height:16px"></div>
<svg style="left:281px;top:538px" width="5" height="9" viewBox="0 0 5 9"><path d="M5 0L0 4.5L5 9Z" fill="#000" shape-rendering="auto"/></svg>
<div class="btn" style="left:368px;top:535px;width:23px;height:16px"></div>
<svg style="left:376px;top:538px" width="5" height="9" viewBox="0 0 5 9"><path d="M0 0L5 4.5L0 9Z" fill="#000" shape-rendering="auto"/></svg>
<div class="btn" style="left:391px;top:535px;width:23px;height:16px"></div>
<svg style="left:397px;top:538px" width="5" height="9" viewBox="0 0 5 9"><path d="M0 0L5 4.5L0 9Z" fill="#000" shape-rendering="auto"/></svg>
<div class="a" style="left:404px;top:538px;width:2px;height:9px;background:#000;"></div>
<div class="btn" style="left:414px;top:535px;width:23px;height:16px"></div>
<svg style="left:417px;top:538px" width="5" height="9" viewBox="0 0 5 9"><path d="M0 0L5 4.5L0 9Z" fill="#000" shape-rendering="auto"/></svg>
<svg style="left:424px;top:538px" width="9" height="9" viewBox="0 0 9 9"><path d="M4.5 0V9M0 4.5H9M1.2 1.2L7.8 7.8M7.8 1.2L1.2 7.8" stroke="#000" stroke-width="1.1" fill="none" shape-rendering="auto"/></svg>
<div class="fld" style="left:301px;top:535px;width:62px;height:16px;border-top-color:var(--sh);border-left-color:var(--sh);box-shadow:inset 1px 1px 0 var(--dk)"></div>
<div class="t" style="font-size:11px;line-height:14px;height:14px;left:355px;top:536px;transform-origin:0 0;transform:scaleX(0.8991);">3</div>
<div class="t" style="font-size:11.5px;line-height:14px;height:14px;left:443px;top:536px;transform-origin:0 0;transform:scaleX(0.9169);">di 3</div>
<div class="btn" style="left:532px;top:535px;width:16px;height:16px"></div>
<svg style="left:537px;top:539px" width="4" height="7" viewBox="0 0 4 7"><path d="M4 0L0 3.5L4 7Z" fill="#000" shape-rendering="auto"/></svg>
<div class="a" style="left:548px;top:535px;width:155px;height:16px;background:repeating-conic-gradient(var(--hi) 0% 25%, var(--face) 0% 50%) 0 0/2px 2px"></div>
<div class="btn" style="left:548px;top:535px;width:67px;height:16px"></div>
<div class="btn" style="left:703px;top:535px;width:16px;height:16px"></div>
<svg style="left:709px;top:539px" width="4" height="7" viewBox="0 0 4 7"><path d="M0 0L4 3.5L0 7Z" fill="#000" shape-rendering="auto"/></svg>
<div class="t" style="font-size:11.5px;line-height:14px;height:14px;left:183px;top:563px;transform-origin:0 0;transform:scaleX(0.9313);">Record:</div>
<div class="btn" style="left:227px;top:562px;width:23px;height:16px"></div>
<div class="a" style="left:233px;top:565px;width:2px;height:9px;background:#000;"></div>
<svg style="left:237px;top:565px" width="5" height="9" viewBox="0 0 5 9"><path d="M5 0L0 4.5L5 9Z" fill="#000" shape-rendering="auto"/></svg>
<div class="btn" style="left:250px;top:562px;width:23px;height:16px"></div>
<svg style="left:259px;top:566px" width="5" height="9" viewBox="0 0 5 9"><path d="M5 0L0 4.500L5 9Z" fill="var(--hi)" shape-rendering="auto"/></svg>
<svg style="left:258px;top:565px" width="5" height="9" viewBox="0 0 5 9"><path d="M5 0L0 4.5L5 9Z" fill="var(--sh)" shape-rendering="auto"/></svg>
<div class="btn" style="left:345px;top:562px;width:23px;height:16px"></div>
<svg style="left:353px;top:565px" width="5" height="9" viewBox="0 0 5 9"><path d="M0 0L5 4.5L0 9Z" fill="#000" shape-rendering="auto"/></svg>
<div class="btn" style="left:368px;top:562px;width:23px;height:16px"></div>
<svg style="left:374px;top:565px" width="5" height="9" viewBox="0 0 5 9"><path d="M0 0L5 4.5L0 9Z" fill="#000" shape-rendering="auto"/></svg>
<div class="a" style="left:381px;top:565px;width:2px;height:9px;background:#000;"></div>
<div class="btn" style="left:391px;top:562px;width:23px;height:16px"></div>
<svg style="left:394px;top:565px" width="5" height="9" viewBox="0 0 5 9"><path d="M0 0L5 4.5L0 9Z" fill="#000" shape-rendering="auto"/></svg>
<svg style="left:401px;top:565px" width="9" height="9" viewBox="0 0 9 9"><path d="M4.5 0V9M0 4.5H9M1.2 1.2L7.8 7.8M7.8 1.2L1.2 7.8" stroke="#000" stroke-width="1.1" fill="none" shape-rendering="auto"/></svg>
<div class="fld" style="left:278px;top:562px;width:62px;height:16px;border-top-color:var(--sh);border-left-color:var(--sh);box-shadow:inset 1px 1px 0 var(--dk)"></div>
<div class="t" style="font-size:11px;line-height:14px;height:14px;left:332px;top:563px;transform-origin:0 0;transform:scaleX(0.8991);">1</div>
<div class="t" style="font-size:11.5px;line-height:14px;height:14px;left:420px;top:563px;transform-origin:0 0;transform:scaleX(0.9169);">di 1</div>
<svg style="left:730px;top:566px" width="13" height="13" viewBox="0 0 13 13"><g shape-rendering="auto" stroke-width="1"><path d="M12 1L1 12M12 5L5 12M12 9L9 12" stroke="var(--hi)"/><path d="M12.5 2L2 12.5M12.5 3L3 12.5M12.5 6L6 12.5M12.5 7L7 12.5M12.5 10L10 12.5M12.5 11L11 12.5" stroke="var(--sh)"/></g></svg>
</body></html>
